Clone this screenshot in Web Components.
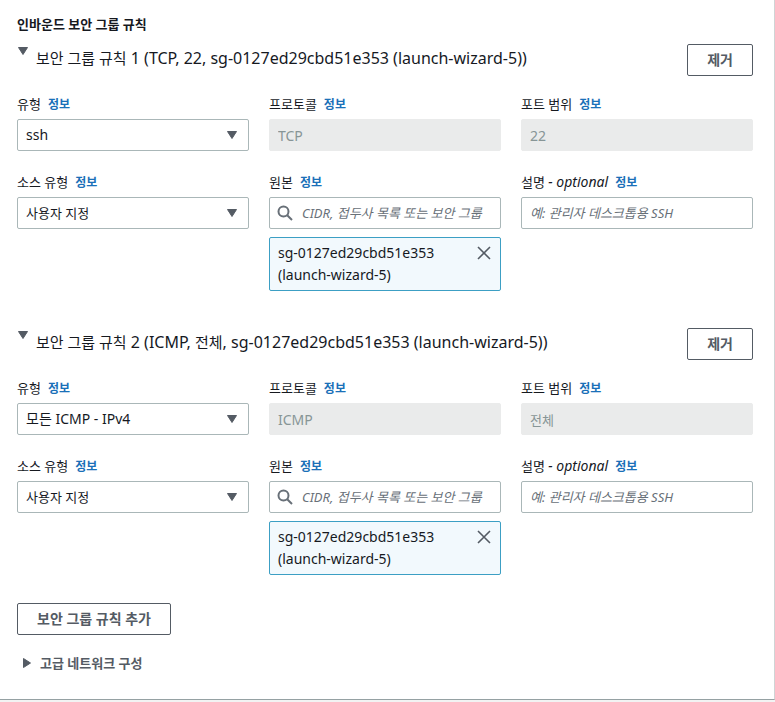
<!DOCTYPE html>
<html lang="ko">
<head>
<meta charset="utf-8">
<meta name="viewport" content="width=device-width, initial-scale=1">
<title>인바운드 보안 그룹 규칙</title>
<style>
  body {
    margin: 0;
    background: #f2f3f3;
    color: #16191f;
    font: 13px/22px "Noto Sans", "Noto Sans CJK KR", sans-serif;
  }
</style>
</head>
<body>
<inbound-rules-panel>
  <span slot="heading">인바운드 보안 그룹 규칙</span>
  <security-rule type="ssh" protocol="TCP" port="22">
    <span slot="name">보안 그룹 규칙</span>
    <span slot="details">1 (TCP, 22, sg-0127ed29cbd51e353 (launch-wizard-5))</span>
  </security-rule>
  <security-rule type="모든 ICMP - IPv4" protocol="ICMP" port="전체">
    <span slot="name">보안 그룹 규칙</span>
    <span slot="details">2 (ICMP, <small style="font-size:15px">전체</small>, sg-0127ed29cbd51e353 (launch-wizard-5))</span>
  </security-rule>
  <outline-button slot="actions">보안 그룹 규칙 추가</outline-button>
  <expand-link slot="actions">고급 네트워크 구성</expand-link>
</inbound-rules-panel>

<script>
const define = (name, html, setup) => {
  const template = document.createElement('template');
  template.innerHTML = '<style>*{box-sizing:border-box}</style>' + html;
  customElements.define(name, class extends HTMLElement {
    connectedCallback() {
      if (this.shadowRoot) return;
      const root = this.attachShadow({ mode: 'open' });
      root.append(template.content.cloneNode(true));
      if (setup) setup(this, root);
    }
  });
};

const isLatin = text => /^[\x20-\x7e]+$/.test(text);

const controlStyle = `
  .control {
    width: 100%; height: 32px; margin: 0; padding: 0 8px;
    border: 1px solid #aab7b8; border-radius: 2px; background: #fff;
    color: #16191f; font: inherit; outline: none;
  }
  .control:focus { border-color: #00a1c9; }
  ::placeholder { color: #687078; font-style: italic; opacity: 1; }
`;
const labelStyle = `
  :host { display: block; min-width: 0; }
  .head { display: flex; align-items: baseline; gap: 7px; height: 22px; margin-bottom: 4px; white-space: nowrap; }
`;
const head = '<div class="head"><label for="field"><slot></slot></label><info-link></info-link></div>';

define('info-link', `
  <style>
    :host { display: block; }
    a { display: block; color: #1a70b8; font-size: 12px; font-weight: 700; text-decoration: none; }
    a:hover { text-decoration: underline; }
  </style>
  <a href="#">정보</a>`);

define('outline-button', `
  <style>
    :host { display: block; }
    button {
      display: block; height: 32px; padding: 0 19px; border: 1px solid #545b64; border-radius: 2px;
      background: #fff; color: #545b64; font: inherit; font-size: 14px; font-weight: 700;
      white-space: nowrap; cursor: pointer;
    }
    button:hover { background: #fafafa; }
  </style>
  <button type="button"><slot></slot></button>`);

define('expand-link', `
  <style>
    :host { display: block; }
    button {
      display: flex; align-items: center; gap: 9px; height: 22px; padding: 0 6px; border: 0;
      background: none; color: #545b64; font: inherit; font-weight: 700; cursor: pointer;
    }
  </style>
  <button type="button" aria-expanded="false">
    <svg width="8" height="10" viewBox="0 0 8 10" aria-hidden="true"><path d="M.5.5v9L7.5 5z" fill="#545b64" stroke="#545b64" stroke-linejoin="round"/></svg>
    <slot></slot>
  </button>`);

define('select-field', `
  <style>
    ${labelStyle}${controlStyle}
    .wrap { display: grid; align-items: center; }
    .wrap > * { grid-area: 1 / 1; }
    select { appearance: none; cursor: pointer; }
    select.large { font-size: 14px; }
    svg { justify-self: end; margin-right: 12px; pointer-events: none; }
  </style>
  ${head}
  <div class="wrap">
    <select id="field" class="control"><option></option></select>
    <svg width="10" height="8" viewBox="0 0 10 8" aria-hidden="true"><path d="M.5.5h9L5 7.5z" fill="#545b64" stroke="#545b64" stroke-linejoin="round"/></svg>
  </div>`,
  (host, root) => {
    const value = host.getAttribute('value');
    root.querySelector('option').textContent = value;
    root.querySelector('select').classList.toggle('large', /[a-z]/i.test(value));
  });

define('text-field', `
  <style>
    ${labelStyle}${controlStyle}
    .control:disabled { background: #eaebeb; border-color: #eaebeb; color: #879596; }
    .control.latin { font-size: 14px; }
  </style>
  ${head}
  <input id="field" class="control" type="text">`,
  (host, root) => {
    const input = root.querySelector('input');
    input.value = host.getAttribute('value') || '';
    input.placeholder = host.getAttribute('placeholder') || '';
    input.disabled = host.hasAttribute('disabled');
    input.classList.toggle('latin', isLatin(input.value));
  });

define('search-field', `
  <style>
    ${labelStyle}${controlStyle}
    .wrap { display: grid; align-items: center; }
    .wrap > * { grid-area: 1 / 1; }
    svg { z-index: 1; margin-left: 8px; pointer-events: none; }
    input.control { padding-left: 32px; }
  </style>
  ${head}
  <div class="wrap">
    <svg width="16" height="16" viewBox="0 0 16 16" fill="none" stroke="#687078" stroke-width="2" aria-hidden="true"><circle cx="6.5" cy="6.5" r="5"/><path d="M10.2 10.2 15 15"/></svg>
    <input id="field" class="control" type="text" placeholder="CIDR, 접두사 목록 또는 보안 그룹">
  </div>
  <slot name="token"></slot>`);

define('group-token', `
  <style>
    :host {
      display: flex; align-items: flex-start; justify-content: space-between;
      margin-top: 8px; padding: 4px 8px; border: 1px solid #3c9fc4; border-radius: 2px;
      background: #f2f9fd; font-size: 14px;
    }
    button { display: flex; padding: 3px 0; border: 0; background: none; cursor: pointer; }
  </style>
  <span><slot></slot></span>
  <button type="button" aria-label="제거">
    <svg width="16" height="16" viewBox="0 0 16 16" fill="none" stroke="#545b64" stroke-width="1.6" aria-hidden="true"><path d="M2 2l12 12M14 2 2 14"/></svg>
  </button>`);

define('security-rule', `
  <style>
    :host { display: block; }
    header { display: flex; justify-content: space-between; align-items: flex-start; margin-bottom: 17px; }
    .title {
      display: flex; align-items: flex-start; gap: 8px; padding: 3px 1px; border: 0;
      background: none; color: inherit; font: inherit; font-size: 16px; text-align: left; cursor: pointer;
    }
    .title svg { flex: none; }
    slot[name=name] { font-size: 15px; }
    .grid { display: grid; grid-template-columns: repeat(3, minmax(0, 1fr)); gap: 20px; }
    em { font-size: 14px; }
  </style>
  <header>
    <button class="title" type="button" aria-expanded="true">
      <svg width="10" height="8" viewBox="0 0 10 8" aria-hidden="true"><path d="M.5.5h9L5 7.5z" fill="#545b64" stroke="#545b64" stroke-linejoin="round"/></svg>
      <span><slot name="name"></slot> <slot name="details"></slot></span>
    </button>
    <outline-button>제거</outline-button>
  </header>
  <div class="grid"></div>`,
  (host, root) => {
    const attr = name => host.getAttribute(name);
    root.querySelector('.grid').innerHTML = `
      <select-field value="${attr('type')}">유형</select-field>
      <text-field value="${attr('protocol')}" disabled>프로토콜</text-field>
      <text-field value="${attr('port')}" disabled>포트 범위</text-field>
      <select-field value="사용자 지정">소스 유형</select-field>
      <search-field>원본<group-token slot="token">sg-0127ed29cbd51e353<br>(launch-wizard-5)</group-token></search-field>
      <text-field placeholder="예: 관리자 데스크톱용 SSH">설명 <em>- optional</em></text-field>`;
  });

define('inbound-rules-panel', `
  <style>
    :host {
      display: block; padding: 12px 21px 25px 17px; background: #fff;
      border-right: 1px solid #d0d4d5; border-bottom: 1px solid #95a1a3;
      box-shadow: 0 1px 1px #d5dbdb;
    }
    h2 { margin: 0 0 8px; font-size: 13px; line-height: 24px; font-weight: 700; }
    .rules { display: grid; gap: 37px; margin-bottom: 28px; }
    .actions { display: grid; gap: 17px; justify-items: start; }
  </style>
  <h2><slot name="heading"></slot></h2>
  <div class="rules"><slot></slot></div>
  <div class="actions"><slot name="actions"></slot></div>`);
</script>
</body>
</html>
